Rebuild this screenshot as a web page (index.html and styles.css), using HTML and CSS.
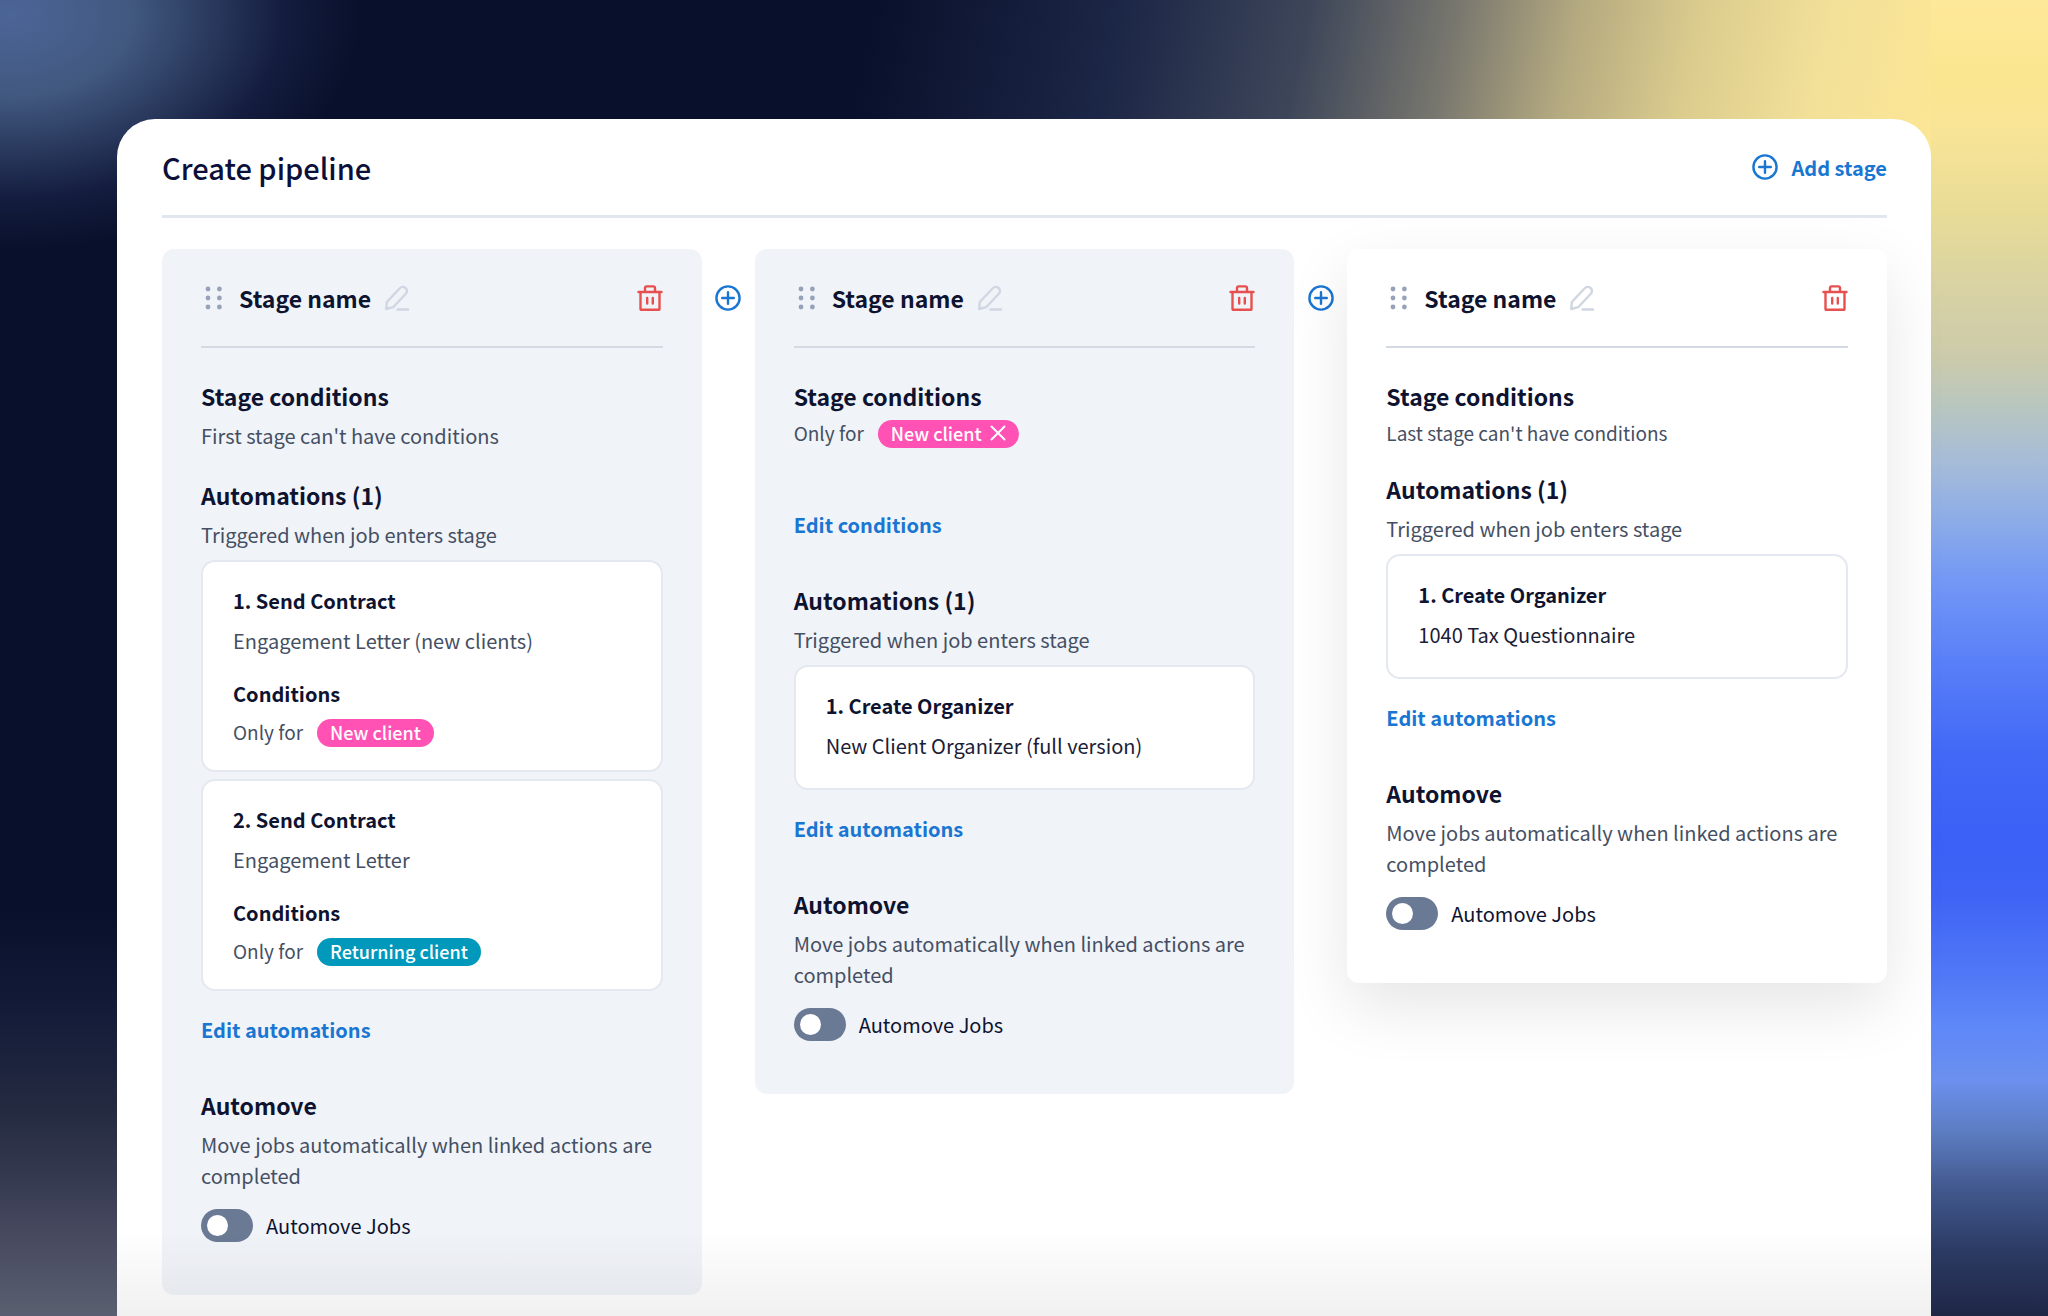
FILE: index.html
```html
<!DOCTYPE html>
<html lang="en">
<head>
    <meta charset="UTF-8">
    <meta name="viewport" content="width=device-width, initial-scale=1.0">
    <title>Create pipeline</title>
    <link rel="stylesheet" href="styles.css">
</head>
<body>
    <!-- shared icons -->
    <svg class="sprite" aria-hidden="true">
        <symbol id="icon-plus" viewBox="0 0 26 26">
            <circle cx="13" cy="13" r="11.6"/>
            <path d="M13 7.2v11.6M7.2 13h11.6"/>
        </symbol>
        <symbol id="icon-trash" viewBox="0 0 26 26">
            <path d="M1.5 7h23M3.5 7v17a.8.8 0 0 0 .8.8h17.4a.8.8 0 0 0 .8-.8v-17M8 7V3.2a1.8 1.8 0 0 1 1.8-1.8h6.4A1.8 1.8 0 0 1 18 3.2v3.8M10.2 13v5.5M15.8 13v5.5"/>
        </symbol>
        <symbol id="icon-pencil" viewBox="0 0 26 26">
            <path d="M2.2 24l.6-7L15.8 3.2a4 4 0 0 1 5.8-.2 4 4 0 0 1 .2 5.800L9.200 22.200 2.200 24zM13.500 24.500h10.500"/>
        </symbol>
        <symbol id="icon-drag" viewBox="0 0 18 26">
            <circle cx="3" cy="4" r="2.4"/><circle cx="14.4" cy="4" r="2.4"/>
            <circle cx="3" cy="13" r="2.4"/><circle cx="14.4" cy="13" r="2.4"/>
            <circle cx="3" cy="22" r="2.4"/><circle cx="14.4" cy="22" r="2.4"/>
        </symbol>
        <symbol id="icon-close" viewBox="0 0 16 16">
            <path d="M1.5 1.5l13 13M14.5 1.5l-13 13"/>
        </symbol>
    </svg>

    <main class="panel">
        <header class="panel-header">
            <h1>Create pipeline</h1>
            <button class="add-stage" type="button"><svg class="icon"><use href="#icon-plus"/></svg>Add stage</button>
        </header>

        <div class="stages">
            <section class="stage">
                <div class="stage-header">
                    <svg class="drag"><use href="#icon-drag"/></svg>
                    <h2>Stage name</h2>
                    <button class="edit" type="button" aria-label="Rename stage"><svg class="icon"><use href="#icon-pencil"/></svg></button>
                    <button class="delete" type="button" aria-label="Delete stage"><svg class="icon"><use href="#icon-trash"/></svg></button>
                </div>
                <div class="block">
                    <h3>Stage conditions</h3>
                    <p>First stage can't have conditions</p>
                </div>
                <div class="block">
                    <h3>Automations (1)</h3>
                    <p>Triggered when job enters stage</p>
                    <div class="cards">
                        <div class="card">
                            <h4>1. Send Contract</h4>
                            <p>Engagement Letter (new clients)</p>
                            <h4 class="card-conditions">Conditions</h4>
                            <div class="condition">Only for <span class="tag pink">New client</span></div>
                        </div>
                        <div class="card">
                            <h4>2. Send Contract</h4>
                            <p>Engagement Letter</p>
                            <h4 class="card-conditions">Conditions</h4>
                            <div class="condition">Only for <span class="tag teal">Returning client</span></div>
                        </div>
                    </div>
                    <button class="link" type="button">Edit automations</button>
                </div>
                <div class="block">
                    <h3>Automove</h3>
                    <p>Move jobs automatically when linked actions are completed</p>
                    <label class="switch"><input type="checkbox" role="switch">Automove Jobs</label>
                </div>
            </section>

            <button class="insert" type="button" aria-label="Insert stage"><svg class="icon"><use href="#icon-plus"/></svg></button>

            <section class="stage">
                <div class="stage-header">
                    <svg class="drag"><use href="#icon-drag"/></svg>
                    <h2>Stage name</h2>
                    <button class="edit" type="button" aria-label="Rename stage"><svg class="icon"><use href="#icon-pencil"/></svg></button>
                    <button class="delete" type="button" aria-label="Delete stage"><svg class="icon"><use href="#icon-trash"/></svg></button>
                </div>
                <div class="block">
                    <h3>Stage conditions</h3>
                    <div class="condition">Only for <span class="tag pink">New client<button class="tag-remove" type="button" aria-label="Remove New client"><svg><use href="#icon-close"/></svg></button></span></div>
                    <button class="link link-conditions" type="button">Edit conditions</button>
                </div>
                <div class="block">
                    <h3>Automations (1)</h3>
                    <p>Triggered when job enters stage</p>
                    <div class="cards">
                        <div class="card">
                            <h4>1. Create Organizer</h4>
                            <p class="dark">New Client Organizer (full version)</p>
                        </div>
                    </div>
                    <button class="link" type="button">Edit automations</button>
                </div>
                <div class="block">
                    <h3>Automove</h3>
                    <p>Move jobs automatically when linked actions are completed</p>
                    <label class="switch"><input type="checkbox" role="switch">Automove Jobs</label>
                </div>
            </section>

            <button class="insert" type="button" aria-label="Insert stage"><svg class="icon"><use href="#icon-plus"/></svg></button>

            <section class="stage raised">
                <div class="stage-header">
                    <svg class="drag"><use href="#icon-drag"/></svg>
                    <h2>Stage name</h2>
                    <button class="edit" type="button" aria-label="Rename stage"><svg class="icon"><use href="#icon-pencil"/></svg></button>
                    <button class="delete" type="button" aria-label="Delete stage"><svg class="icon"><use href="#icon-trash"/></svg></button>
                </div>
                <div class="block">
                    <h3>Stage conditions</h3>
                    <p class="small">Last stage can't have conditions</p>
                </div>
                <div class="block">
                    <h3>Automations (1)</h3>
                    <p>Triggered when job enters stage</p>
                    <div class="cards">
                        <div class="card">
                            <h4>1. Create Organizer</h4>
                            <p class="dark">1040 Tax Questionnaire</p>
                        </div>
                    </div>
                    <button class="link" type="button">Edit automations</button>
                </div>
                <div class="block">
                    <h3>Automove</h3>
                    <p>Move jobs automatically when linked actions are completed</p>
                    <label class="switch"><input type="checkbox" role="switch">Automove Jobs</label>
                </div>
            </section>
        </div>
    </main>
</body>
</html>
```
FILE: styles.css
```css
* {
    box-sizing: border-box;
}
body {
    margin: 0;
    min-height: 100vh;
    padding: 119px 117px 0;
    display: flex;
    font-family: 'Noto Sans CJK SC', 'Noto Sans', sans-serif;
    font-size: 20px;
    line-height: 31px;
    color: #0e1330;
    background-color: #09102b;
    background-image:
        linear-gradient(180deg, #fee899 0%, #fae690 6%, #f8e496 10%, #e8dc96 16%, #d8d2a4 22%, #cccbaa 27%, #b8c6c0 31%, #a6bcd8 35%, #8faee6 39%, #7398f5 44%, #5a80f8 50%, #4269f6 57%, #3a60f6 64%, #3f64f5 68%, #5078f6 74%, #5f88f8 78%, #6b90ee 82%, #5c7cc0 86%, #435a90 90%, #2b3a62 95%, #1f2646 100%),
        linear-gradient(102deg, transparent 42%, #1c2646 54%, #3d4659 63%, #77766e 70%, #b5aa80 76%, #dccd8e 82%, #f2e099 88%, #fce695 94%),
        radial-gradient(ellipse 350px 235px at 10px 15px, #4b6597, #41587f 35%, #2a3a5e 57%, #141d3f 78%, #09102b),
        linear-gradient(0deg, #5a6070, #484a60 6%, #34384f 11%, #232a40 16%, #121a38 24%, #09102b 31%);
    background-size: 117px 100%, 100% 160px, 100% 260px, 117px 100%;
    background-position: right top, left top, left top, left top;
    background-repeat: no-repeat;
}
h1, h2, h3, h4, p {
    margin: 0;
    font-weight: 500;
}
button {
    padding: 0;
    border: 0;
    background: none;
    font: inherit;
    cursor: pointer;
}
.sprite {
    position: absolute;
    width: 0;
    height: 0;
}
.icon {
    display: block;
    width: 26px;
    height: 26px;
    fill: none;
    stroke: currentColor;
    stroke-width: 2.4px;
    stroke-linecap: round;
    stroke-linejoin: round;
}
.panel {
    flex: 1;
    min-width: 0;
    position: relative;
    padding: 0 44px 23px 45px;
    background-color: #fff;
    border-radius: 38px 38px 0 0;
}
/* fade at the bottom edge */
.panel::after {
    content: "";
    position: absolute;
    left: 0;
    right: 0;
    bottom: 0;
    height: 90px;
    background: linear-gradient(transparent, rgba(0, 0, 0, 0.06));
    pointer-events: none;
}
.panel-header {
    display: flex;
    align-items: center;
    justify-content: space-between;
    height: 99px;
    border-bottom: 3px solid #e1e7f0;
    margin-bottom: 31px;
}
.panel-header h1 {
    font-size: 29px;
    line-height: 44px;
    color: #0c0f3a;
}
.add-stage {
    display: flex;
    align-items: center;
    gap: 13px;
    font-weight: 700;
    color: #1976d2;
}
.stages {
    display: flex;
    align-items: flex-start;
}
.stage {
    flex: 1;
    min-width: 0;
    padding: 0 39px 53px;
    background-color: #f0f3f8;
    border-radius: 12px;
}
.raised {
    background-color: #fff;
    box-shadow: 0 24px 64px rgba(0, 0, 0, 0.1);
}
.stage-header {
    display: flex;
    align-items: center;
    height: 99px;
    border-bottom: 2px solid #d3dae3;
    margin-bottom: 30px;
}
.stage-header h2 {
    font-size: 23px;
    line-height: 36px;
    font-weight: 700;
}
.drag {
    width: 18px;
    height: 26px;
    margin: 0 16px 0 4px;
    fill: #96a2b8;
}
.edit {
    margin-left: 13px;
    color: #d0d7e2;
}
.delete {
    margin-left: auto;
    color: #e8504f;
}
.insert {
    width: 53px;
    height: 98px;
    display: flex;
    align-items: center;
    justify-content: center;
    color: #1976d2;
}
.block + .block {
    margin-top: 26px;
}
.block h3 {
    font-size: 23px;
    line-height: 36px;
    font-weight: 700;
    margin-bottom: 6px;
}
.block p {
    font-weight: 400;
    color: #454f63;
}
.block .small {
    font-size: 19px;
    line-height: 25px;
}
.block .dark {
    color: #1b2036;
}
.cards {
    display: flex;
    flex-direction: column;
    gap: 7px;
    margin-top: 10px;
}
.card {
    min-height: 125px;
    padding: 23px 30px;
    background-color: #fff;
    border: 2px solid #e4e8f0;
    border-radius: 14px;
}
.card h4 {
    font-weight: 700;
    margin-bottom: 9px;
}
.card .card-conditions {
    margin: 22px 0 10px;
}
.condition {
    display: flex;
    align-items: baseline;
    gap: 14px;
    font-size: 19px;
    line-height: 26px;
    color: #454f63;
}
.tag {
    display: flex;
    align-items: center;
    gap: 8px;
    padding: 0 13px 2px;
    border-radius: 14px;
    font-size: 18px;
    font-weight: 500;
    color: #fff;
}
.pink {
    background-color: #ff52b4;
}
.teal {
    background-color: #0099bb;
}
.tag-remove svg {
    display: block;
    width: 16px;
    height: 16px;
    fill: none;
    stroke: #fff;
    stroke-width: 2px;
    stroke-linecap: round;
}
.link {
    display: block;
    margin: 24px 0 42px;
    line-height: 30px;
    font-weight: 700;
    color: #1976d2;
}
.link-conditions {
    margin-top: 62px;
}
.switch {
    display: flex;
    align-items: center;
    gap: 13px;
    margin-top: 18px;
    line-height: 33px;
}
.switch input {
    appearance: none;
    width: 52px;
    height: 33px;
    margin: 0;
    padding: 6px;
    border-radius: 17px;
    background-color: #6b7a94;
}
.switch input::before {
    content: "";
    display: block;
    width: 21px;
    height: 21px;
    border-radius: 50%;
    background-color: #fff;
}
.switch input:checked {
    background-color: #1976d2;
}
.switch input:checked::before {
    margin-left: auto;
}
```
